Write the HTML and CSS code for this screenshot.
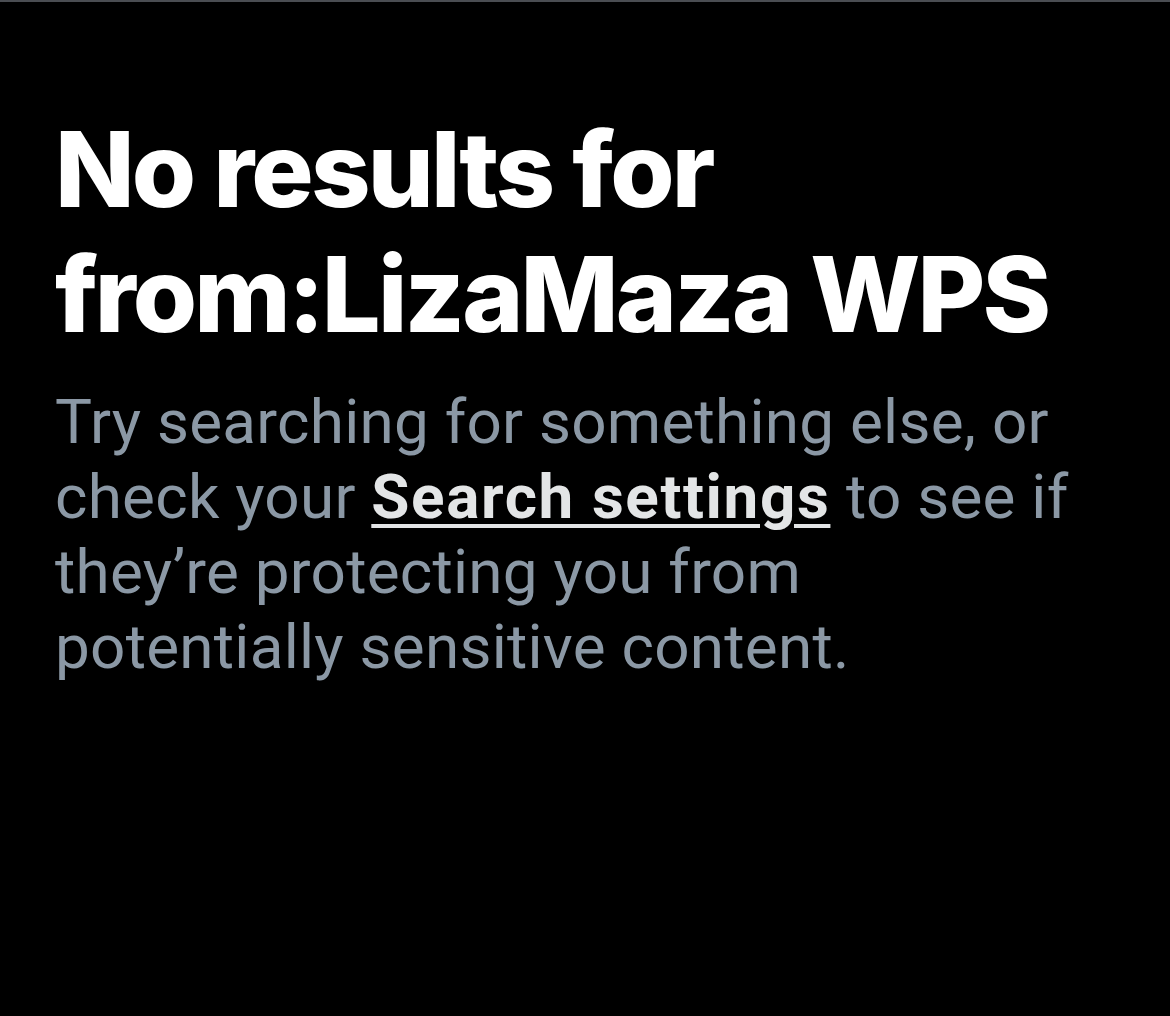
FILE: index.html
```html
<!DOCTYPE html>
<html lang="en">
<head>
<meta charset="utf-8">
<title>No results</title>
<link rel="stylesheet" href="styles.css">
</head>
<body>
<main class="page">
  <section class="empty">
    <h1 class="empty-title">No results for from:LizaMaza WPS</h1>
    <p class="empty-text">Try searching for something else, or check your <a class="empty-link" href="#">Search settings</a> to see if they’re protecting you from potentially sensitive content.</p>
  </section>
</main>
</body>
</html>
```
FILE: styles.css
```css
html, body {
  margin: 0;
  padding: 0;
  background: #000;
}
body {
  width: 1170px;
  height: 1016px;
  overflow: hidden;
}
.page {
  height: 1016px;
  box-sizing: border-box;
  border-top: 2px solid #4a4d52;
  background: #000;
}
.empty {
  padding: 105px 40px 0 55px;
}
.empty-title {
  margin: 0;
  width: 1060px;
  font-family: Inter, "Liberation Sans", sans-serif;
  font-weight: 800;
  font-size: 104px;
  line-height: 125px;
  letter-spacing: -2.8px;
  color: #ffffff;
}
.empty-text {
  margin: 27px 0 0;
  width: 1030px;
  font-family: Roboto, "Liberation Sans", sans-serif;
  font-size: 62px;
  line-height: 75px;
  letter-spacing: 0.25px;
  color: #8b98a5;
}
.empty-link {
  color: #e3e5e6;
  font-weight: 700;
  letter-spacing: 1.6px;
  text-decoration: underline;
  text-decoration-thickness: 4px;
  text-underline-offset: 6px;
}
```
